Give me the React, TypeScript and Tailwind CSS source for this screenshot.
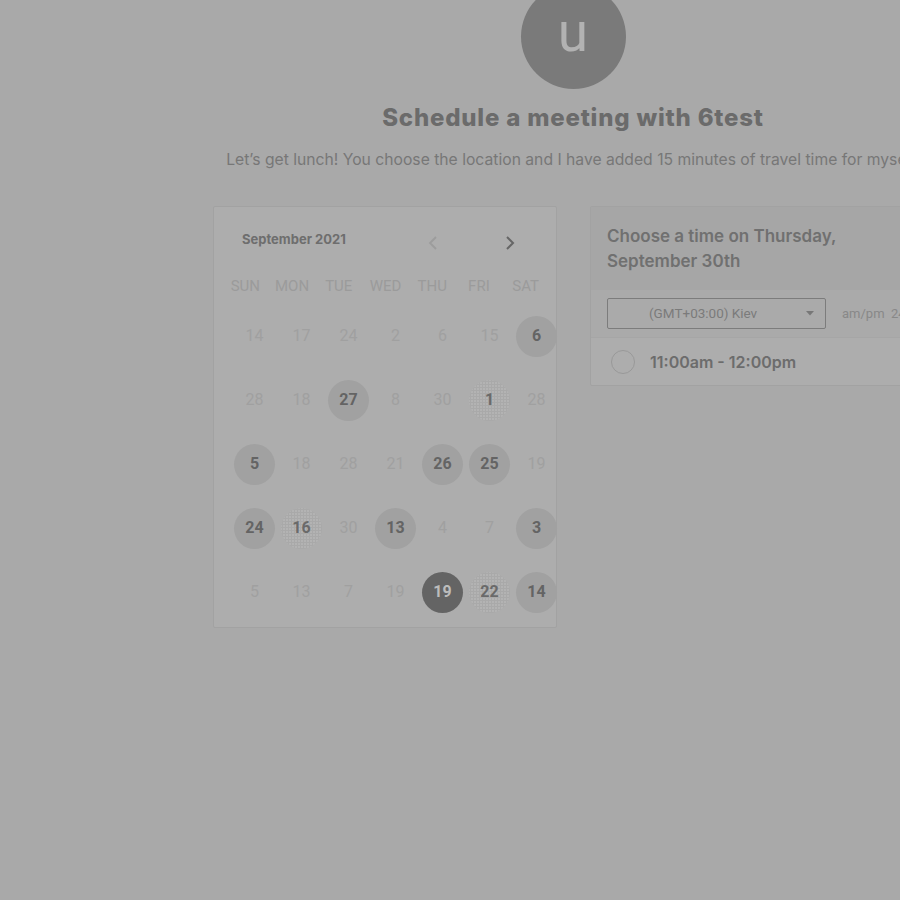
import React from "react";

type Cell = { n: number; kind: "off" | "on" | "tex" | "sel" };

const rows: Cell[][] = [
  [
    { n: 14, kind: "off" },
    { n: 17, kind: "off" },
    { n: 24, kind: "off" },
    { n: 2, kind: "off" },
    { n: 6, kind: "off" },
    { n: 15, kind: "off" },
    { n: 6, kind: "on" },
  ],
  [
    { n: 28, kind: "off" },
    { n: 18, kind: "off" },
    { n: 27, kind: "on" },
    { n: 8, kind: "off" },
    { n: 30, kind: "off" },
    { n: 1, kind: "tex" },
    { n: 28, kind: "off" },
  ],
  [
    { n: 5, kind: "on" },
    { n: 18, kind: "off" },
    { n: 28, kind: "off" },
    { n: 21, kind: "off" },
    { n: 26, kind: "on" },
    { n: 25, kind: "on" },
    { n: 19, kind: "off" },
  ],
  [
    { n: 24, kind: "on" },
    { n: 16, kind: "tex" },
    { n: 30, kind: "off" },
    { n: 13, kind: "on" },
    { n: 4, kind: "off" },
    { n: 7, kind: "off" },
    { n: 3, kind: "on" },
  ],
  [
    { n: 5, kind: "off" },
    { n: 13, kind: "off" },
    { n: 7, kind: "off" },
    { n: 19, kind: "off" },
    { n: 19, kind: "sel" },
    { n: 22, kind: "tex" },
    { n: 14, kind: "on" },
  ],
];

function Day({ c }: { c: Cell }) {
  if (c.kind === "off") {
    return <span className="text-[16px] text-[#a0a0a0]">{c.n}</span>;
  }
  if (c.kind === "sel") {
    return (
      <span className="flex h-[41px] w-[41px] items-center justify-center rounded-full bg-[#646464] text-[16px] font-bold text-[#bcbcbc]">
        {c.n}
      </span>
    );
  }
  if (c.kind === "tex") {
    return (
      <span className="flex h-[41px] w-[41px] items-center justify-center rounded-full bg-[#b3b3b3] bg-[radial-gradient(#a9a9a9_1px,transparent_1.3px)] bg-[length:3px_3px] text-[16px] font-bold text-[#6a6a6a]">
        {c.n}
      </span>
    );
  }
  return (
    <span className="flex h-[41px] w-[41px] items-center justify-center rounded-full bg-[#a1a1a1] text-[16px] font-bold text-[#646464]">
      {c.n}
    </span>
  );
}

export default function App() {
  const days = ["SUN", "MON", "TUE", "WED", "THU", "FRI", "SAT"];
  return (
    <div className="h-[900px] w-[900px] overflow-hidden bg-[#a9a9a9] font-['Roboto',sans-serif]">
      <div className="flex w-[1146px] flex-col items-center">
        <div className="mt-[-16px] flex h-[105px] w-[105px] items-center justify-center rounded-full bg-[#7a7a7a]">
          <span className="mt-[-8px] text-[55px] font-normal leading-none text-[#b2b2b2]">u</span>
        </div>
        <h1 className="mt-[13px] h-[32px] font-['Inter',sans-serif] text-[24px] font-extrabold leading-[32px] tracking-[0.8px] text-[#6b6b6b]">
          Schedule a meeting with 6test
        </h1>
        <p className="mt-[15px] h-[22px] whitespace-nowrap font-['Inter',sans-serif] text-[15.7px] leading-[22px] text-[#777777]">
          Let’s get lunch! You choose the location and I have added 15 minutes of travel time for myself.
        </p>
        <div className="mt-[35px] flex items-start gap-[33px]">
          {/* Calendar */}
          <div className="w-[344px] rounded-[2px] border border-[#a2a2a2] bg-[#adadad] pb-[3px] pt-[16px]">
            <div className="flex h-[34px] items-center">
              <span className="ml-[28px] w-[175px] font-['Inter',sans-serif] text-[13px] font-bold text-[#6e6e6e]">
                September 2021
              </span>
              <span className="mt-[6px] flex w-[32px] justify-center">
                <svg width="10" height="16" viewBox="0 0 10 16">
                  <polyline points="8,2 2,8 8,14" fill="none" stroke="#9c9c9c" strokeWidth="1.8" />
                </svg>
              </span>
              <span className="ml-[45px] mt-[6px] flex w-[32px] justify-center">
                <svg width="10" height="16" viewBox="0 0 10 16">
                  <polyline points="2,2 8,8 2,14" fill="none" stroke="#666666" strokeWidth="2" />
                </svg>
              </span>
            </div>
            <div className="ml-[8px] mt-[18px] grid h-[22px] w-[327px] grid-cols-7">
              {days.map((d) => (
                <span key={d} className="text-center text-[15px] leading-[22px] text-[#9b9b9b]">
                  {d}
                </span>
              ))}
            </div>
            <div className="ml-[17px] mt-[7px] grid w-[329px] grid-cols-7">
              {rows.map((r, i) =>
                r.map((c, j) => (
                  <div key={`${i}-${j}`} className="flex h-[64px] items-center justify-center">
                    <Day c={c} />
                  </div>
                ))
              )}
            </div>
          </div>
          {/* Time card */}
          <div className="w-[343px] rounded-[2px] border border-[#a2a2a2] bg-[#adadad]">
            <div className="bg-[#a6a6a6] pb-[16px] pl-[16px] pt-[17px] font-['Inter',sans-serif] text-[17px] font-semibold leading-[25px] text-[#707070]">
              Choose a time on Thursday,
              <br />
              September 30th
            </div>
            <div className="flex h-[48px] items-center border-b border-[#a6a6a6] bg-[#aaaaaa] pl-[16px]">
              <div className="flex h-[31px] w-[219px] items-center rounded-[2px] border border-[#7c7c7c]">
                <span className="ml-[41px] text-[13.5px] text-[#7b7b7b]">(GMT+03:00) Kiev</span>
                <svg className="ml-auto mr-[11px]" width="8" height="5" viewBox="0 0 8 5">
                  <polygon points="0,0 8,0 4,4.5" fill="#777777" />
                </svg>
              </div>
              <span className="ml-[16px] whitespace-nowrap text-[13px] text-[#888888]">am/pm&nbsp;&nbsp;24h</span>
            </div>
            <div className="flex h-[47px] items-center pl-[20px]">
              <span className="h-[24px] w-[24px] rounded-full border-[1.5px] border-[#999999]" />
              <span className="ml-[15px] font-['Inter',sans-serif] text-[16px] font-semibold text-[#6c6c6c]">
                11:00am - 12:00pm
              </span>
            </div>
          </div>
        </div>
      </div>
    </div>
  );
}
